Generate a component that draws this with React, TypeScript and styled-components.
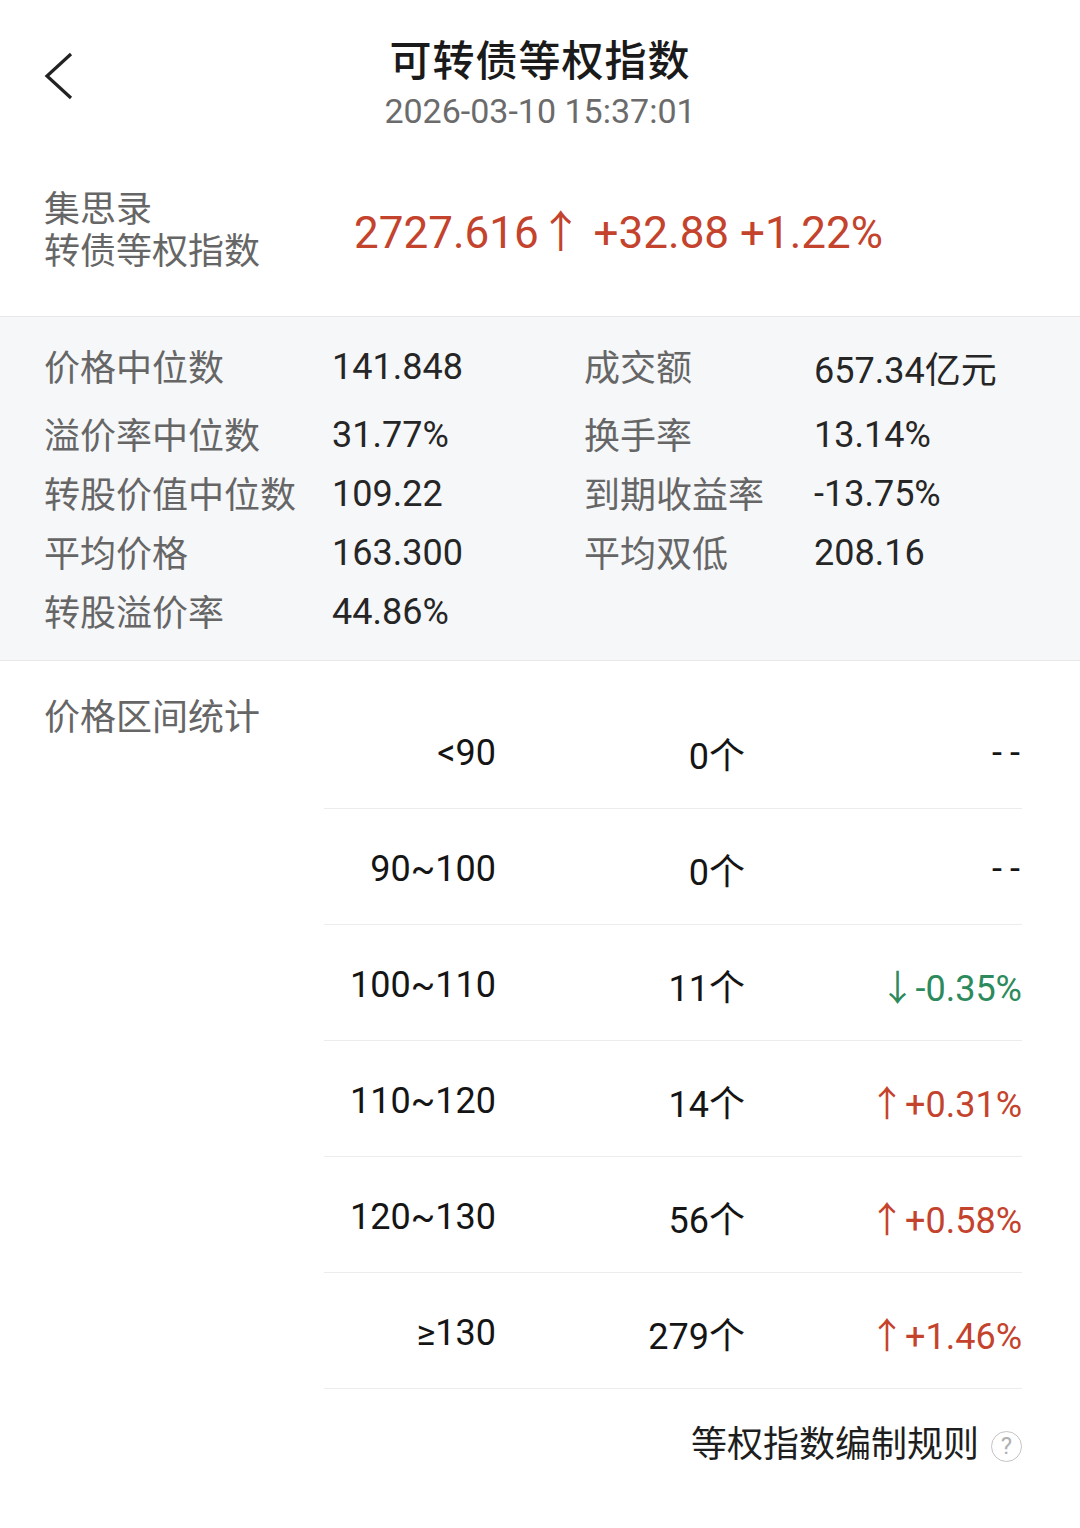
import * as React from "react";
import styled, { createGlobalStyle } from "styled-components";

const GlobalStyle = createGlobalStyle`
  html, body {
    margin: 0;
    padding: 0;
    background: #ffffff;
  }
  body {
    font-family: Roboto, "Noto Sans CJK SC", sans-serif;
    -webkit-font-smoothing: antialiased;
  }
`;

const RED = "#c4432d";
const GREEN = "#2d8a5c";

const SPage = styled.div`
  width: 1080px;
  min-height: 1528px;
  background: #ffffff;
  color: #222;
`;

const SHeader = styled.header`
  display: grid;
  grid-template-columns: 120px 1fr 120px;
  padding-top: 37px;
`;

const SBack = styled.div`
  padding-left: 44px;
  padding-top: 15px;
  display: flex;
  align-items: flex-start;
`;

const STitleBox = styled.div`
  display: flex;
  flex-direction: column;
  align-items: center;
`;

const STitle = styled.h1`
  margin: 0;
  font-size: 42px;
  line-height: 50px;
  font-weight: 500;
  color: #1a1a1a;
  letter-spacing: 1px;
`;

const STime = styled.div`
  margin-top: 4px;
  font-size: 34px;
  line-height: 40px;
  color: #6b6b6b;
`;

const SIndex = styled.section`
  display: grid;
  grid-template-columns: 310px 1fr;
  align-items: center;
  padding: 58px 0 43px 44px;
  border-bottom: 1px solid #e8e8e8;
`;

const SIndexName = styled.div`
  font-size: 36px;
  line-height: 42px;
  color: #666;
`;

const SIndexValue = styled.div`
  font-size: 44px;
  line-height: 52px;
  padding-top: 4px;
  color: ${RED};
  white-space: pre;
`;

const SStats = styled.section`
  background: #f6f7f9;
  padding: 18px 0 21px 44px;
  border-bottom: 1px solid #e8e8e8;
`;

const SStatRow = styled.div<{ $extra?: number }>`
  display: grid;
  grid-template-columns: 288px 252px 230px 1fr;
  height: 59px;
  align-items: center;
  font-size: 36px;
  margin-bottom: ${({ $extra }) => $extra ?? 0}px;
`;

const SLabel = styled.span`
  color: #666;
  white-space: nowrap;
`;

const SValue = styled.span`
  color: #262626;
  white-space: nowrap;
  padding-top: 4px;
`;

const SRange = styled.section`
  display: grid;
  grid-template-columns: 280px 698px;
  padding: 32px 0 0 44px;
`;

const SRangeTitle = styled.div`
  font-size: 36px;
  line-height: 50px;
  color: #666;
`;

const STable = styled.div`
  display: flex;
  flex-direction: column;
`;

const SRow = styled.div`
  display: grid;
  grid-template-columns: 172px 249px 277px;
  height: 116px;
  align-items: center;
  border-bottom: 1px solid #ececec;
  font-size: 36px;
  color: #151515;
  padding-top: 4px;
  box-sizing: border-box;
`;

const SCell = styled.span<{ $color?: string; $dash?: boolean }>`
  text-align: right;
  white-space: nowrap;
  color: ${({ $color }) => $color ?? "#151515"};
  letter-spacing: ${({ $dash }) => ($dash ? "8px" : "normal")};
  margin-right: ${({ $dash }) => ($dash ? "-6px" : "0")};
`;

const SFooter = styled.div`
  display: flex;
  justify-content: flex-end;
  align-items: center;
  gap: 12px;
  padding: 31px 58px 0 0;
  height: 50px;
`;

const SFooterText = styled.span`
  font-size: 36px;
  line-height: 50px;
  color: #1e1e1e;
`;

const SHelp = styled.span`
  width: 29px;
  height: 29px;
  border: 1.5px solid #c4c4c4;
  border-radius: 50%;
  color: #b0b0b0;
  font-size: 24px;
  line-height: 29px;
  text-align: center;
  font-family: Roboto, sans-serif;
  margin-top: 2px;
`;

const stats: [string, string, string?, string?][] = [
  ["价格中位数", "141.848", "成交额", "657.34亿元"],
  ["溢价率中位数", "31.77%", "换手率", "13.14%"],
  ["转股价值中位数", "109.22", "到期收益率", "-13.75%"],
  ["平均价格", "163.300", "平均双低", "208.16"],
  ["转股溢价率", "44.86%"],
];

const ranges: { range: string; count: string; change: string; dir: "up" | "down" | "none" }[] = [
  { range: "<90", count: "0个", change: "--", dir: "none" },
  { range: "90~100", count: "0个", change: "--", dir: "none" },
  { range: "100~110", count: "11个", change: "↓-0.35%", dir: "down" },
  { range: "110~120", count: "14个", change: "↑+0.31%", dir: "up" },
  { range: "120~130", count: "56个", change: "↑+0.58%", dir: "up" },
  { range: "≥130", count: "279个", change: "↑+1.46%", dir: "up" },
];

const colorFor = (dir: "up" | "down" | "none") =>
  dir === "up" ? RED : dir === "down" ? GREEN : "#151515";

export default function App() {
  return (
    <SPage>
      <GlobalStyle />
      <SHeader>
        <SBack>
          <svg width="30" height="48" viewBox="0 0 30 48">
            <path d="M27 2 L3 24 L27 46" fill="none" stroke="#222" strokeWidth="3.2" />
          </svg>
        </SBack>
        <STitleBox>
          <STitle>可转债等权指数</STitle>
          <STime>2026-03-10 15:37:01</STime>
        </STitleBox>
        <div />
      </SHeader>

      <SIndex>
        <SIndexName>
          集思录
          <br />
          转债等权指数
        </SIndexName>
        <SIndexValue>2727.616↑ +32.88 +1.22%</SIndexValue>
      </SIndex>

      <SStats>
        {stats.map(([l1, v1, l2, v2], i) => (
          <SStatRow key={l1} $extra={i === 0 ? 9 : 0}>
            <SLabel>{l1}</SLabel>
            <SValue>{v1}</SValue>
            <SLabel>{l2}</SLabel>
            <SValue>{v2}</SValue>
          </SStatRow>
        ))}
      </SStats>

      <SRange>
        <SRangeTitle>价格区间统计</SRangeTitle>
        <STable>
          {ranges.map((r) => (
            <SRow key={r.range}>
              <SCell>{r.range}</SCell>
              <SCell>{r.count}</SCell>
              <SCell $color={colorFor(r.dir)} $dash={r.dir === "none"}>
                {r.change}
              </SCell>
            </SRow>
          ))}
        </STable>
      </SRange>

      <SFooter>
        <SFooterText>等权指数编制规则</SFooterText>
        <SHelp>?</SHelp>
      </SFooter>
    </SPage>
  );
}
